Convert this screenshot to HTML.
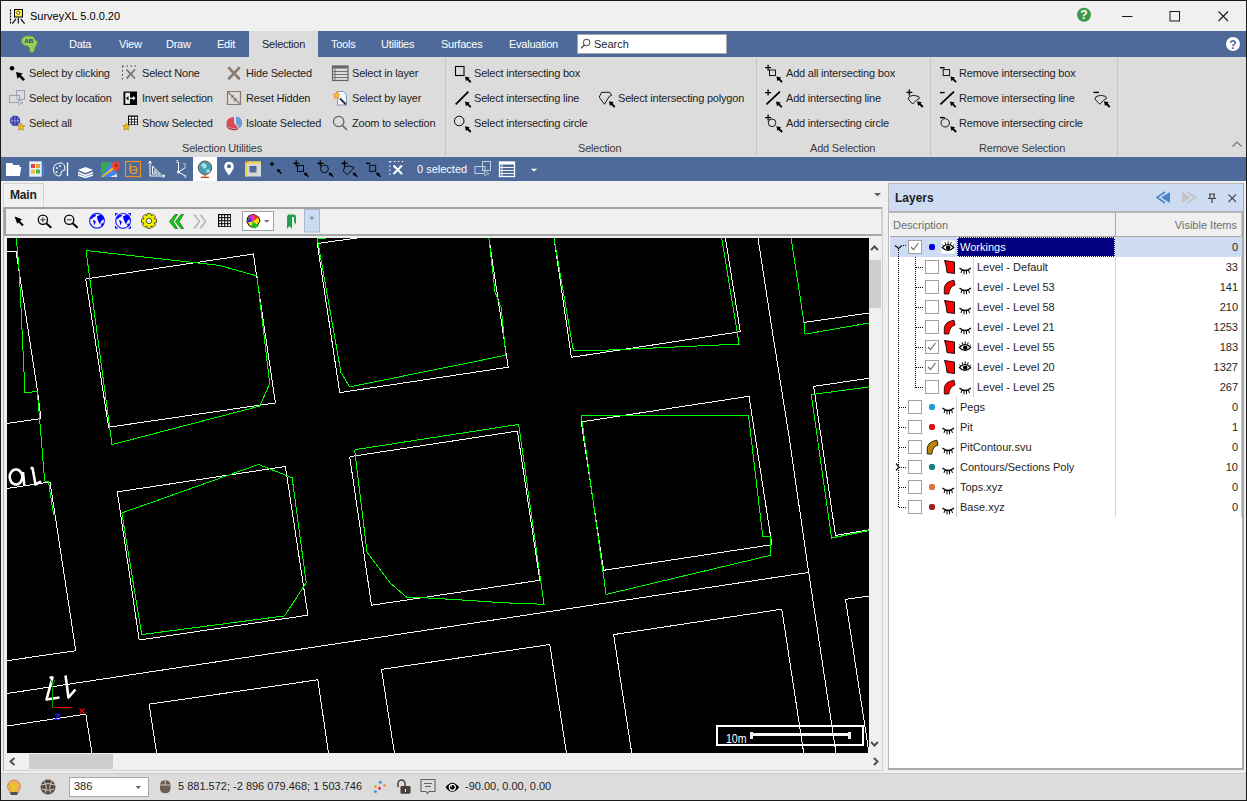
<!DOCTYPE html>
<html><head><meta charset="utf-8">
<style>
*{margin:0;padding:0;box-sizing:border-box}
html,body{width:1247px;height:801px;overflow:hidden;background:#f0f0f0;font-family:"Liberation Sans",sans-serif;font-size:11px;color:#1e1e1e}
.a{position:absolute}
.t{position:absolute;white-space:nowrap;line-height:13px}
.rt{letter-spacing:-0.2px}
.menu .t{color:#fff;top:38px;letter-spacing:-0.25px}
.glabel{color:#3c3c3c}
.sep{position:absolute;top:58px;width:1px;height:98px;background:#c4c4c4}
svg{overflow:hidden}
</style></head><body>

<!-- title bar -->
<div class="a" style="left:0;top:0;width:1247px;height:31px;background:#f0f0f0"></div>
<div class="t" style="left:30px;top:10px;color:#000">SurveyXL 5.0.0.20</div>
<!-- menu bar -->
<div class="a" style="left:1px;top:31px;width:1245px;height:26px;background:#4d6a9a"></div>
<div class="a" style="left:249px;top:31px;width:69px;height:26px;background:#dcdcdc"></div>
<div class="menu">
<div class="t" style="left:69px">Data</div>
<div class="t" style="left:119px">View</div>
<div class="t" style="left:166px">Draw</div>
<div class="t" style="left:217px">Edit</div>
<div class="t" style="left:262px;color:#1e1e1e">Selection</div>
<div class="t" style="left:331px">Tools</div>
<div class="t" style="left:381px">Utilities</div>
<div class="t" style="left:441px">Surfaces</div>
<div class="t" style="left:509px">Evaluation</div>
</div>
<div class="a" style="left:577px;top:34px;width:150px;height:20px;background:#fff;border:1px solid #a8a8a8"></div>
<svg class="a" style="left:580px;top:37px" width="14" height="14" viewBox="580 37 14 14"><circle cx="586.6" cy="42.5" r="3.3" fill="none" stroke="#404040" stroke-width="1"/><path d="M584.4,45l-3.3,3.2" stroke="#404040" stroke-width="1.2"/></svg>
<div class="t" style="left:594px;top:38px;color:#1e1e1e">Search</div>
<!-- ribbon -->
<div class="a" style="left:1px;top:57px;width:1245px;height:100px;background:#dcdcdc"></div>
<div class="sep" style="left:445px"></div>
<div class="sep" style="left:756px"></div>
<div class="sep" style="left:930px"></div>
<div class="sep" style="left:1117px"></div>
<div class="rib rt">
<div class="t" style="left:29px;top:67px">Select by clicking</div>
<div class="t" style="left:29px;top:92px">Select by location</div>
<div class="t" style="left:29px;top:117px">Select all</div>
<div class="t" style="left:142px;top:67px">Select None</div>
<div class="t" style="left:142px;top:92px">Invert selection</div>
<div class="t" style="left:142px;top:117px">Show Selected</div>
<div class="t" style="left:246px;top:67px">Hide Selected</div>
<div class="t" style="left:246px;top:92px">Reset Hidden</div>
<div class="t" style="left:246px;top:117px">Isloate Selected</div>
<div class="t" style="left:352px;top:67px">Select in layer</div>
<div class="t" style="left:352px;top:92px">Select by layer</div>
<div class="t" style="left:352px;top:117px">Zoom to selection</div>
<div class="t" style="left:474px;top:67px">Select intersecting box</div>
<div class="t" style="left:474px;top:92px">Select intersecting line</div>
<div class="t" style="left:474px;top:117px">Select intersecting circle</div>
<div class="t" style="left:618px;top:92px">Select intersecting polygon</div>
<div class="t" style="left:786px;top:67px">Add all intersecting box</div>
<div class="t" style="left:786px;top:92px">Add intersecting line</div>
<div class="t" style="left:786px;top:117px">Add intersecting circle</div>
<div class="t" style="left:959px;top:67px">Remove intersecting box</div>
<div class="t" style="left:959px;top:92px">Remove intersecting line</div>
<div class="t" style="left:959px;top:117px">Remove intersecting circle</div>
<div class="t glabel" style="left:182px;top:142px">Selection Utilities</div>
<div class="t glabel" style="left:578px;top:142px">Selection</div>
<div class="t glabel" style="left:810px;top:142px">Add Selection</div>
<div class="t glabel" style="left:979px;top:142px">Remove Selection</div>
</div>
<!-- blue toolbar -->
<div class="a" style="left:1px;top:157px;width:1245px;height:24px;background:#4d6a9a"></div>
<div class="t" style="left:417px;top:163px;color:#fff">0 selected</div>
<!-- tab area -->
<div class="a" style="left:3px;top:183px;width:41px;height:25px;background:#f0f0f0;border:1px solid #d4d4d4;border-bottom:none"></div>
<div class="t" style="left:10px;top:189px;font-weight:bold;font-size:12px;color:#1e1e1e;letter-spacing:-0.2px">Main</div>
<!-- map frame -->
<div class="a" style="left:3px;top:207px;width:1px;height:564px;background:#b0b0b0"></div>
<div class="a" style="left:4px;top:207px;width:878px;height:29px;background:#f0f0f0;border:2px solid #a0a0a0;border-right:1px solid #d0d0d0;border-bottom-color:#a8a8a8"></div>
<div class="a" style="left:869px;top:238px;width:13px;height:531px;background:#f0f0f0"></div>
<div class="a" style="left:869px;top:260px;width:12px;height:48px;background:#cdcdcd"></div>
<div class="a" style="left:882px;top:207px;width:1px;height:564px;background:#d0d0d0"></div>
<div class="a" style="left:4px;top:770px;width:879px;height:1px;background:#d0d0d0"></div>
<!-- hscroll -->
<div class="a" style="left:7px;top:753px;width:875px;height:17px;background:#f0f0f0"></div>
<div class="a" style="left:29px;top:754px;width:84px;height:15px;background:#cdcdcd"></div>
<svg class="a" style="left:7px;top:238px" width="862" height="515" viewBox="7 238 862 515" shape-rendering="crispEdges">
<rect x="7" y="238" width="862" height="515" fill="#000"/>
<polyline fill="none" stroke="#ffffff" points="7,251 16,251 37.5,391 41,418.5 7,423.5"/>
<polyline fill="none" stroke="#ffffff" points="7,488.5 50,482 75.8,650.7 7,660.7"/>
<polyline fill="none" stroke="#ffffff" points="85.7,279 253.4,254 275.4,402.9 108.6,427.2 85.7,279"/>
<polyline fill="none" stroke="#ffffff" points="357.1,238 317.3,243.5 339.7,392.6 508.2,367.2 488.9,238"/>
<polyline fill="none" stroke="#ffffff" points="554,238 571.4,357.3 740.3,331.7 725.4,238"/>
<polyline fill="none" stroke="#ffffff" points="758,238 771.5,326 788.8,434.9 808.7,572.4 836,753"/>
<polyline fill="none" stroke="#ffffff" points="804,322.5 869,313"/>
<polyline fill="none" stroke="#ffffff" points="117.3,491.9 285.4,466.5 307.9,615.2 139.2,640 117.3,491.9"/>
<polyline fill="none" stroke="#ffffff" points="349.7,456.7 517.4,431.1 539.8,580.3 371.5,605.2 349.7,456.7"/>
<polyline fill="none" stroke="#ffffff" points="581.2,421.9 749,396.3 771.9,544.7 603.6,570.3 581.2,421.9"/>
<polyline fill="none" stroke="#ffffff" points="869,378.2 813.7,386.4 835.5,535.5 869,529.8"/>
<polyline fill="none" stroke="#ffffff" points="7,693.5 808.7,572.4"/>
<polyline fill="none" stroke="#ffffff" points="7,726 85.8,714.1 92,753"/>
<polyline fill="none" stroke="#ffffff" points="156.6,753 149.1,704.2 317.8,679.8 328.5,753"/>
<polyline fill="none" stroke="#ffffff" points="394.4,753 381.5,669.4 549.8,644.5 566.4,753"/>
<polyline fill="none" stroke="#ffffff" points="631.7,753 613.6,634.6 781.8,609.2 803.7,753"/>
<polyline fill="none" stroke="#ffffff" points="869,596 845.5,599.3 869,753"/>
<polyline fill="none" stroke="#00ff00" points="16.3,238 19.3,272 25,393 37.3,391.2 44.7,481 48.5,482 53.5,514.2 55,514"/>
<polyline fill="none" stroke="#00ff00" points="86,250.5 218.8,265.3 257,276 269.7,383.7 259.8,406.1 112,444.6 86,250.5"/>
<polyline fill="none" stroke="#00ff00" points="326,238.5 317.3,238.5 341,372.7 349.7,386.9 505.8,355.3 501.3,308 495,292 488.9,238"/>
<polyline fill="none" stroke="#00ff00" points="554,238 573.4,350.8 592,350.8 739.1,344.1 721.7,238"/>
<polyline fill="none" stroke="#00ff00" points="791.1,238 804,322.5 805,334.2 869,323"/>
<polyline fill="none" stroke="#00ff00" points="121.8,513 258.5,464.5 292.1,477.7 306.2,582.7 284.6,615.9 141.7,634.6 121.8,513"/>
<polyline fill="none" stroke="#00ff00" points="354.6,449.7 518.7,424.4 544,604.2 517.4,603.5 496.3,602.3 459,599.8 424.2,597.8 406.8,597.3 390.7,583.6 367,552.1 354.6,449.7"/>
<polyline fill="none" stroke="#00ff00" points="581.2,415.4 748.5,415.4 762.7,536.2 770.2,536.2 770.2,555.4 606.1,594.4 581.2,415.4"/>
<polyline fill="none" stroke="#00ff00" points="869,386.9 811.2,394.6 831.6,538 869,530.5"/>
<g fill="none" stroke="#fff" stroke-width="2.6" shape-rendering="geometricPrecision" stroke-linejoin="round">
<ellipse cx="16" cy="477" rx="6.3" ry="7.6"/>
<path d="M23,472 L24.3,486"/>
<path d="M30.5,468 L32.5,468 L35.5,484.5 L41,481.5"/>
<path d="M49.5,677.5 L52.5,677.5 L46.5,699.5 L59.5,697.5"/>
<path d="M65.5,675.5 L68.5,697.5 L75.5,689.5"/>
</g>
<line x1="52.5" y1="686" x2="52.5" y2="707.5" stroke="#00a000"/>
<path d="M51,680 L53,685 M55,680 L52,687" stroke="#00a000" stroke-width="1" fill="none" shape-rendering="geometricPrecision"/>
<line x1="53" y1="707.5" x2="71.5" y2="707.5" stroke="#f00000" stroke-width="1.2"/>
<path d="M79.5,708.5 L84.5,713.5 M84.5,708.5 L79.5,713.5" stroke="#f00000" stroke-width="1.3" fill="none" shape-rendering="geometricPrecision"/>
<path d="M55,714.5 H59.5 L55,719.3 H59.8" stroke="#2020ff" stroke-width="1.3" fill="none" shape-rendering="geometricPrecision"/>
<rect x="717" y="725.5" width="146" height="19" fill="none" stroke="#fff" stroke-width="2"/>
<text x="726" y="743" fill="#fff" font-family="Liberation Sans" font-size="12" transform="translate(726 743) scale(0.88 1) translate(-726 -743)">10m</text>
<rect x="751" y="733" width="99" height="3" fill="#f8f8f8"/>
<rect x="750" y="731.5" width="3" height="7" fill="#f0f0f0"/>
<rect x="848" y="731.5" width="3" height="7" fill="#f0f0f0"/>
</svg>
<!-- status bar -->
<div class="a" style="left:1px;top:773px;width:1245px;height:27px;background:#dcdcdc;border-top:1px solid #cdcdcd"></div>
<div class="a" style="left:69px;top:777px;width:80px;height:20px;background:#fff;border:1px solid #a8a8a8"></div>
<div class="t" style="left:74px;top:780px">386</div>
<div class="t" style="left:178px;top:780px">5 881.572; -2 896 079.468; 1 503.746</div>
<div class="t" style="left:465px;top:780px">-90.00, 0.00, 0.00</div>
<svg class="a" style="left:0;top:0" width="1247" height="801" viewBox="0 0 1247 801"><path d="M10.5,9.5V24" stroke="#000" stroke-width="1.2" stroke-dasharray="2,1"/>
<rect x="14.5" y="9.5" width="8" height="7.5" fill="#ffee33" stroke="#000" stroke-width="1"/>
<circle cx="18.3" cy="12.8" r="1.6" fill="#fff" stroke="#000" stroke-width="0.6"/>
<path d="M18.3,17.5V23.5M16,18.8L12.3,23.6M20.7,18.8L24.6,23.6" stroke="#000" stroke-width="1.1"/>
<circle cx="1084" cy="14.8" r="7" fill="#3a9a4a"/>
<text x="1084" y="19.3" text-anchor="middle" font-family="Liberation Sans" font-weight="bold" font-size="12" fill="#fff">?</text>
<path d="M1122,16.5h10.5" stroke="#1a1a1a" stroke-width="1"/>
<rect x="1170" y="11.5" width="9.5" height="9.5" fill="none" stroke="#1a1a1a" stroke-width="1"/>
<path d="M1218.5,11.5l9.5,9.5M1228,11.5l-9.5,9.5" stroke="#1a1a1a" stroke-width="1.1"/>
<circle cx="1233" cy="44" r="7" fill="#fff"/>
<text x="1233" y="48.5" text-anchor="middle" font-family="Liberation Sans" font-weight="bold" font-size="12" fill="#4d6a9a">?</text>
<path d="M24,37 Q27,35.5 30,36.3 Q33.5,36 34.5,38.5 Q35,40.5 37.3,41.5 Q37.5,44.5 35.5,46 Q34.5,48 34,51 Q32.5,53.2 30.5,52.3 Q29.8,50 29.5,47.5 Q28,45.5 25,45.3 Q21.3,44 21.4,40.5 Q22,38 24,37 Z" fill="#9ccc50" stroke="#78a838" stroke-width="0.6"/>
<text x="24.3" y="42.8" font-family="Liberation Sans" font-weight="bold" font-size="6.2" fill="#1a3a8a">AB</text>
<polyline points="1232.5,146.5 1237,142 1241.5,146.5" fill="none" stroke="#707070" stroke-width="1.1"/>
<circle cx="12" cy="68.3" r="2.3" fill="#000"/>
<polygon points="16,72 22.665,73.395 17.395,78.665" fill="#000"/><line x1="19.1" y1="75.1" x2="24.06" y2="80.06" stroke="#000" stroke-width="2.635"/>
<rect x="16.5" y="90.5" width="8" height="9" fill="none" stroke="#9aa0b0" stroke-width="1"/>
<rect x="9.5" y="95.5" width="10" height="7" fill="#dcdcdc" fill-opacity="0.5" stroke="#9aa0b0" stroke-width="1"/>
<polygon points="18,99.5 23,103 20,103.5 19,105" fill="#dcdcdc" stroke="#9aa0b0" stroke-width="0.8"/>
<circle cx="15" cy="120.8" r="5.2" fill="#3535a8"/>
<path d="M12,117v7.5M15,116v9.5M18,117v7.5M10.5,120.8h9" stroke="#9aa0e0" stroke-width="0.8"/>
<polygon points="21.00,123.00 22.06,125.54 24.80,125.76 22.71,127.56 23.35,130.24 21.00,128.80 18.65,130.24 19.29,127.56 17.20,125.76 19.94,125.54" fill="#f5c400" stroke="#a07800" stroke-width="0.6"/>
<path d="M122.5,66h16M122.5,66v15" stroke="#404040" stroke-width="1" stroke-dasharray="1.5,2.5"/>
<path d="M126.5,69.5l8.5,9M135,69.5l-8.5,9" stroke="#707070" stroke-width="1.8"/>
<rect x="123.5" y="91.5" width="13.5" height="13.5" fill="#000"/>
<rect x="125.3" y="92.8" width="4.7" height="11" fill="#e8e8e8"/>
<path d="M126.5,98.3h8" stroke="#fff" stroke-width="1.3"/><polygon points="126,98.3 128.5,96 128.5,100.6" fill="#000"/><polygon points="135.5,98.3 133,96 133,100.6" fill="#fff"/>
<rect x="128" y="115.5" width="10" height="9.5" fill="#000"/>
<rect x="129" y="116.8" width="2.2" height="2" fill="#fff"/>
<rect x="132" y="116.8" width="2.2" height="2" fill="#fff"/>
<rect x="135" y="116.8" width="2.2" height="2" fill="#fff"/>
<rect x="129" y="119.6" width="2.2" height="2" fill="#fff"/>
<rect x="132" y="119.6" width="2.2" height="2" fill="#fff"/>
<rect x="135" y="119.6" width="2.2" height="2" fill="#fff"/>
<rect x="129" y="122.4" width="2.2" height="2" fill="#fff"/>
<rect x="132" y="122.4" width="2.2" height="2" fill="#fff"/>
<rect x="135" y="122.4" width="2.2" height="2" fill="#fff"/>
<polygon points="126.30,123.20 127.31,125.62 129.91,125.83 127.93,127.53 128.53,130.07 126.30,128.71 124.07,130.07 124.67,127.53 122.69,125.83 125.29,125.62" fill="#f5c400" stroke="#a07800" stroke-width="0.6"/>
<path d="M229,68l10,10.5M239,68l-10,10.5" stroke="#8c7a70" stroke-width="2.6" stroke-linecap="round"/>
<path d="M227.5,91.5h13v13h-13z" fill="none" stroke="#8c7a70" stroke-width="1.2"/>
<path d="M228,92l5.5,5.5M240,104l-6,-6" stroke="#8c7a70" stroke-width="1.2"/><polygon points="234,98 230.5,97.5 233.5,94.5" fill="#8c7a70"/><polygon points="233.5,98.5 237.5,98.5 234,102" fill="#8c7a70"/>
<path d="M234,123 L234,117 A7.5,6 0 0 0 226.5,124 A7.5,5 0 0 0 238,127.5 Z" fill="#d94a58"/>
<path d="M226.5,124.5 A7.5,5 0 0 0 238,128 L238,129.5 A7.5,5 0 0 1 226.5,126 Z" fill="#b83040"/>
<path d="M236,116.5 A6,6 0 0 1 242,123.5 A6,6 0 0 1 239.5,128.5 L236,123 Z" fill="#6a9ad8"/>
<rect x="332.5" y="66" width="15.5" height="14.5" fill="none" stroke="#666" stroke-width="1.2"/>
<rect x="332.5" y="66" width="15.5" height="2.5" fill="#666"/>
<path d="M332.5,71.5h15.5M332.5,74.5h15.5M332.5,77.5h15.5M335,68.5v12" stroke="#666" stroke-width="0.9"/>
<path d="M337.5,91.5h6l3,3v10.5h-9z" fill="#f4f4ff" stroke="#8090b0" stroke-width="0.9"/>
<path d="M340,98.5l6,6" stroke="#203040" stroke-width="1.8"/>
<polygon points="336.50,91.70 337.51,94.12 340.11,94.33 338.13,96.03 338.73,98.57 336.50,97.21 334.27,98.57 334.87,96.03 332.89,94.33 335.49,94.12" fill="#ffc020" stroke="#e08000" stroke-width="0.6"/>
<circle cx="338.7" cy="121.5" r="5.2" fill="none" stroke="#606060" stroke-width="1.2"/><path d="M342.5,125.5l4.5,4.5" stroke="#606060" stroke-width="1.5"/>
<rect x="455.5" y="66.5" width="8.5" height="9" fill="none" stroke="#000" stroke-width="1.1"/><polygon points="465,76.5 469.73,77.49 465.99,81.23" fill="#000"/><line x1="467.2" y1="78.7" x2="470.72" y2="82.22" stroke="#000" stroke-width="1.87"/>
<path d="M455.7,104.4L468.4,91.7" stroke="#000" stroke-width="1.8"/><polygon points="465,101.4 469.73,102.39 465.99,106.13" fill="#000"/><line x1="467.2" y1="103.6" x2="470.72" y2="107.12" stroke="#000" stroke-width="1.87"/>
<circle cx="459.2" cy="121" r="4.8" fill="none" stroke="#000" stroke-width="1"/><polygon points="465,126.3 469.73,127.29 465.99,131.03" fill="#000"/><line x1="467.2" y1="128.5" x2="470.72" y2="132.02" stroke="#000" stroke-width="1.87"/>
<polygon points="599.2,97.2 601.5,92.3 609.6,92.3 611.7,95.3 609.3,96.3 604.5,104.3" fill="none" stroke="#000" stroke-width="0.9"/><polygon points="609,101.3 613.73,102.29 609.99,106.03" fill="#000"/><line x1="611.2" y1="103.5" x2="614.72" y2="107.02" stroke="#000" stroke-width="1.87"/>
<path d="M765.1,67.7h6M768.1,64.7v6" stroke="#000" stroke-width="1.3" fill="none"/><rect x="769.5" y="70" width="6" height="5.6" fill="none" stroke="#000" stroke-width="0.9"/><polygon points="776.4,76.4 781.13,77.39 777.39,81.13" fill="#000"/><line x1="778.6" y1="78.6" x2="782.12" y2="82.12" stroke="#000" stroke-width="1.87"/>
<path d="M765.1,92.6h6M768.1,89.6v6" stroke="#000" stroke-width="1.3" fill="none"/><path d="M766.4,104.4L779.9,91.7" stroke="#000" stroke-width="1.8"/><polygon points="776,101.4 780.73,102.39 776.99,106.13" fill="#000"/><line x1="778.2" y1="103.6" x2="781.72" y2="107.12" stroke="#000" stroke-width="1.87"/>
<path d="M765.1,117.6h6M768.1,114.6v6" stroke="#000" stroke-width="1.3" fill="none"/><circle cx="772.1" cy="122.8" r="3.8" fill="none" stroke="#000" stroke-width="0.9"/><polygon points="776.4,126.3 781.13,127.29 777.39,131.03" fill="#000"/><line x1="778.6" y1="128.5" x2="782.12" y2="132.02" stroke="#000" stroke-width="1.87"/>
<path d="M906.3,92.4h6M909.3,89.4v6" stroke="#000" stroke-width="1.3" fill="none"/><polygon points="908.1,98.9 909.6,96.3 913.5,95.3 918.6,96.5 919.5,98.3 916.5,100.1 912.6,104" fill="none" stroke="#000" stroke-width="0.9"/><polygon points="917.1,101.3 921.83,102.29 918.09,106.03" fill="#000"/><line x1="919.3" y1="103.5" x2="922.82" y2="107.02" stroke="#000" stroke-width="1.87"/>
<path d="M940,67.7H944.7" stroke="#000" stroke-width="1.4" fill="none"/><rect x="943.2" y="69.6" width="6.4" height="6" fill="none" stroke="#000" stroke-width="0.9"/><polygon points="950.4,76.4 955.13,77.39 951.39,81.13" fill="#000"/><line x1="952.6" y1="78.6" x2="956.12" y2="82.12" stroke="#000" stroke-width="1.87"/>
<path d="M940,92.6H944.7" stroke="#000" stroke-width="1.4" fill="none"/><path d="M940.4,104.4L953.9,91.7" stroke="#000" stroke-width="1.8"/><polygon points="950,101.4 954.73,102.39 950.99,106.13" fill="#000"/><line x1="952.2" y1="103.6" x2="955.72" y2="107.12" stroke="#000" stroke-width="1.87"/>
<path d="M940,117.6H944.7" stroke="#000" stroke-width="1.4" fill="none"/><circle cx="945.2" cy="122.8" r="4.2" fill="none" stroke="#000" stroke-width="0.9"/><polygon points="950.4,126.3 955.13,127.29 951.39,131.03" fill="#000"/><line x1="952.6" y1="128.5" x2="956.12" y2="132.02" stroke="#000" stroke-width="1.87"/>
<path d="M1093.5,92.4H1098.9" stroke="#000" stroke-width="1.4" fill="none"/><polygon points="1095,99.2 1096.2,96.5 1100.7,95.3 1105.5,96.3 1106.7,98.3 1103.4,100.4 1099.8,104.3" fill="none" stroke="#000" stroke-width="0.9"/><polygon points="1104,101.3 1108.73,102.29 1104.99,106.03" fill="#000"/><line x1="1106.2" y1="103.5" x2="1109.72" y2="107.02" stroke="#000" stroke-width="1.87"/>
<path d="M6,163h6l1.5,2H19.5v2H21.3L19.8,176H6z" fill="#fff"/>
<rect x="29.5" y="161.5" width="12" height="15" fill="#e8eef8" stroke="#c0c8d8" stroke-width="0.8"/><rect x="31" y="164" width="4" height="4" fill="#e04040"/><rect x="36" y="164" width="4" height="4" fill="#f0a030"/><rect x="31" y="169.5" width="4" height="4" fill="#f0c040"/><rect x="36" y="169.5" width="4" height="4" fill="#40c040"/><path d="M43,163v13" stroke="#4080e0" stroke-width="1.8"/>
<path d="M61,163 Q53,163 53.5,170 Q54,176 60,176 Q62,174 61,172 Q63,170 65,170 Q65,163 61,163z" fill="none" stroke="#fff" stroke-width="1"/><circle cx="57" cy="168" r="0.9" fill="#fff"/><circle cx="56.5" cy="172" r="0.9" fill="#fff"/><circle cx="60" cy="166" r="0.9" fill="#fff"/><path d="M67.5,165v11" stroke="#fff" stroke-width="1.3"/><path d="M67.5,161.5q-1.5,2 0,4q1.5,-2 0,-4z" fill="#fff"/>
<path d="M78,170l7.5,-3l7.5,3l-7.5,3z" fill="#fff"/><path d="M78,172.5l7.5,3l7.5,-3M78,175l7.5,2.5l7.5,-2.5" fill="none" stroke="#fff" stroke-width="1.4"/>
<path d="M101,162h10l-10,15z" fill="#34a853"/><path d="M101,177l10,-15l6,7v8z" fill="#4285f4"/><path d="M101,177l12.5,-10.5l1.5,2l-12,8.5z" fill="#fbbc04"/><path d="M110,177l7,-3v3z" fill="#e8e8e8"/><path d="M112,165.5a4,4 0 1 1 8,0c0,3 -4,7 -4,7s-4,-4 -4,-7z" fill="#ea4335"/><circle cx="116" cy="165.5" r="1.4" fill="#a52714"/>
<rect x="125.5" y="161.5" width="15" height="15" fill="none" stroke="#f09020" stroke-width="1.2"/><circle cx="133.5" cy="170" r="3.5" fill="none" stroke="#f0a030" stroke-width="1.2"/><path d="M130,163.5v6.5M131,170h5" stroke="#f0a030" stroke-width="1.2"/>
<path d="M150,161v15h15M150,161l-1.5,2.5M150,161l1.5,2.5M165,176l-2.5,-1.5M165,176l-2.5,1.5" fill="none" stroke="#fff" stroke-width="1"/><path d="M152.5,166v8h8z" fill="none" stroke="#fff" stroke-width="1"/><path d="M154,169v4h4z" fill="#c8d0e0"/>
<path d="M178.5,172v-10M178.5,172l7,-4.5M178.5,172l7,4" fill="none" stroke="#fff" stroke-width="1"/><circle cx="178.5" cy="172" r="1.5" fill="#fff"/><text x="176" y="163" font-size="5" font-family="Liberation Sans" fill="#fff">z</text><text x="183" y="167" font-size="5" font-family="Liberation Sans" fill="#fff">Y</text><text x="184" y="178" font-size="5" font-family="Liberation Sans" fill="#fff">x</text>
<rect x="193" y="157" width="24" height="24" fill="#fff"/><circle cx="205" cy="167.8" r="6.8" fill="#40a0b0" stroke="#803030" stroke-width="0.8"/><path d="M201,165l2,-2l3,1l1,3l-3,2zM206,170l3,-1l1,3l-3,1z" fill="#a0e0e0"/><path d="M205,174.6v1.8M201,177.3h8" stroke="#c04010" stroke-width="1.3"/>
<path d="M229,175.5 Q224,169 224.2,166.5 A4.8,4.8 0 0 1 233.8,166.5 Q234,169 229,175.5z" fill="#fff"/><circle cx="229" cy="166.3" r="2" fill="#4d6a9a"/>
<rect x="245" y="161.5" width="16" height="15" fill="#d8d8d8"/><rect x="245" y="161.5" width="16" height="2" fill="#f0d040"/><rect x="245" y="161.5" width="2" height="15" fill="#f0d040"/><rect x="249.5" y="166" width="7" height="6.5" fill="#4d6a9a"/><path d="M245.5,162h2" stroke="#e04040" stroke-width="1"/>
<circle cx="272" cy="164" r="1.8" fill="#000"/><polygon points="277,169 280.655,169.765 277.765,172.655" fill="#000"/><line x1="278.7" y1="170.7" x2="281.42" y2="173.42" stroke="#000" stroke-width="1.445"/>
<path d="M293.2,163.4h6M296.2,160.4v6" stroke="#000" stroke-width="1.3" fill="none"/><rect x="297.5" y="165.5" width="6" height="6" fill="none" stroke="#000" stroke-width="0.9"/><polygon points="304,172.4 307.655,173.165 304.765,176.055" fill="#000"/><line x1="305.7" y1="174.1" x2="308.42" y2="176.82" stroke="#000" stroke-width="1.445"/>
<path d="M317.3,163.4h6M320.3,160.4v6" stroke="#000" stroke-width="1.3" fill="none"/><circle cx="324.5" cy="168.8" r="3.9" fill="none" stroke="#000" stroke-width="0.9"/><polygon points="328.7,172.4 332.355,173.165 329.465,176.055" fill="#000"/><line x1="330.4" y1="174.1" x2="333.12" y2="176.82" stroke="#000" stroke-width="1.445"/>
<path d="M341.4,163.4h6M344.4,160.4v6" stroke="#000" stroke-width="1.3" fill="none"/><polygon points="343.2,171 345,166.5 349.5,165.8 354,167.5 352,170 347.5,174.8" fill="none" stroke="#000" stroke-width="0.9"/><polygon points="352.8,172.4 356.455,173.165 353.565,176.055" fill="#000"/><line x1="354.5" y1="174.1" x2="357.22" y2="176.82" stroke="#000" stroke-width="1.445"/>
<path d="M366,163.4H370.2" stroke="#000" stroke-width="1.4" fill="none"/><rect x="369.7" y="165.3" width="6" height="6" fill="none" stroke="#000" stroke-width="0.9"/><polygon points="376.2,172.4 379.855,173.165 376.965,176.055" fill="#000"/><line x1="377.9" y1="174.1" x2="380.62" y2="176.82" stroke="#000" stroke-width="1.445"/>
<path d="M389.8,161.5h15M389.8,161.5v15.5" stroke="#fff" stroke-width="1" stroke-dasharray="1.5,2.5"/><path d="M393.5,165.5l8.5,8.5M402,165.5l-8.5,8.5" stroke="#fff" stroke-width="2"/>
<rect x="482.5" y="161.5" width="8" height="9" fill="none" stroke="#c0cce0" stroke-width="1"/><rect x="475" y="166.5" width="10" height="7" fill="none" stroke="#c0cce0" stroke-width="1"/><polygon points="484,170 489,174 486,174.5 485,176" fill="#4d6a9a" stroke="#c0cce0" stroke-width="0.8"/>
<rect x="499.5" y="162" width="15" height="14.5" fill="none" stroke="#fff" stroke-width="1.3"/><rect x="499.5" y="162" width="15" height="2.5" fill="#fff"/><path d="M499.5,167.5h15M499.5,170.5h15M499.5,173.5h15M502,164.5v12" stroke="#fff" stroke-width="0.9"/>
<polygon points="530.7,168.8 537.3,168.8 534,171.5" fill="#fff"/>
<polygon points="874,193 881,193 877.5,196.5" fill="#606060"/>
<polygon points="14.6,216.6 22,219.2 17.2,223.7" fill="#000"/><path d="M18,220.5l5,5" stroke="#000" stroke-width="2"/>
<circle cx="42.9" cy="219.8" r="4.6" fill="none" stroke="#000" stroke-width="1.3"/><path d="M46.3,223.3l5,4.5" stroke="#000" stroke-width="2"/><path d="M40.4,219.8h5M42.9,217.3v5" stroke="#333" stroke-width="1"/>
<circle cx="69.2" cy="219.8" r="4.6" fill="none" stroke="#000" stroke-width="1.3"/><path d="M72.6,223.3l5,4.5" stroke="#000" stroke-width="2"/><path d="M67,219.8h4.5" stroke="#333" stroke-width="1"/>
<circle cx="97" cy="220.8" r="7.4" fill="none" stroke="#2020ff" stroke-width="1.2"/><polygon points="90.20,218.20 92.00,215.60 94.50,214.60 96.00,214.80 95.70,216.20 93.20,217.20 91.80,219.20" fill="#0000ff"/><polygon points="92.80,220.00 94.80,220.60 95.80,221.80 94.20,225.40 93.60,222.00" fill="#0000ff"/><polygon points="97.00,216.20 100.00,215.00 102.80,215.40 104.20,219.00 101.80,220.20 99.80,224.20 98.40,221.30 97.40,219.20" fill="#0000ff"/><circle cx="102.3" cy="224.6" r="1.3" fill="#0000ff"/>
<circle cx="123.1" cy="220.9" r="7.4" fill="none" stroke="#2020ff" stroke-width="1.2"/><polygon points="116.30,218.30 118.10,215.70 120.60,214.70 122.10,214.90 121.80,216.30 119.30,217.30 117.90,219.30" fill="#0000ff"/><polygon points="118.90,220.10 120.90,220.70 121.90,221.90 120.30,225.50 119.70,222.10" fill="#0000ff"/><polygon points="123.10,216.30 126.10,215.10 128.90,215.50 130.30,219.10 127.90,220.30 125.90,224.30 124.50,221.40 123.50,219.30" fill="#0000ff"/><circle cx="128.4" cy="224.7" r="1.3" fill="#0000ff"/><path d="M115,213h3.2l-3.2,3.2zM131,213h-3.2l3.2,3.2zM115,228.8h3.2l-3.2,-3.2zM131,228.8h-3.2l3.2,-3.2z" fill="#2020ff"/>
<polygon points="154.11,218.62 156.42,219.24 156.42,222.56 154.11,223.18 154.23,222.90 155.42,224.97 153.07,227.32 151.00,226.13 151.28,226.01 150.66,228.32 147.34,228.32 146.72,226.01 147.00,226.13 144.93,227.32 142.58,224.97 143.77,222.90 143.89,223.18 141.58,222.56 141.58,219.24 143.89,218.62 143.77,218.90 142.58,216.83 144.93,214.48 147.00,215.67 146.72,215.79 147.34,213.48 150.66,213.48 151.28,215.79 151.00,215.67 153.07,214.48 155.42,216.83 154.23,218.90" fill="#f0f000" stroke="#303000" stroke-width="0.8"/><circle cx="149" cy="220.9" r="2.7" fill="#f0f0f0" stroke="#303000" stroke-width="0.8"/>
<path d="M175,214.5l-5.5,7l5.5,7h2.5l-4.5,-7l4.5,-7zM181,214.5l-5.5,7l5.5,7h2.5l-4.5,-7l4.5,-7z" fill="#00e000" stroke="#103010" stroke-width="0.6"/>
<path d="M193,214.5l5.5,7l-5.5,7h2.5l5,-7l-5,-7zM199,214.5l5.5,7l-5.5,7h2.5l5,-7l-5,-7z" fill="#b8b8b8"/>
<rect x="218" y="214" width="13" height="13" fill="#000"/>
<rect x="219.2" y="215.2" width="2" height="2" fill="#fff"/>
<rect x="222.2" y="215.2" width="2" height="2" fill="#fff"/>
<rect x="225.2" y="215.2" width="2" height="2" fill="#fff"/>
<rect x="228.2" y="215.2" width="2" height="2" fill="#fff"/>
<rect x="219.2" y="218.2" width="2" height="2" fill="#fff"/>
<rect x="222.2" y="218.2" width="2" height="2" fill="#fff"/>
<rect x="225.2" y="218.2" width="2" height="2" fill="#fff"/>
<rect x="228.2" y="218.2" width="2" height="2" fill="#fff"/>
<rect x="219.2" y="221.2" width="2" height="2" fill="#fff"/>
<rect x="222.2" y="221.2" width="2" height="2" fill="#fff"/>
<rect x="225.2" y="221.2" width="2" height="2" fill="#fff"/>
<rect x="228.2" y="221.2" width="2" height="2" fill="#fff"/>
<rect x="219.2" y="224.2" width="2" height="2" fill="#fff"/>
<rect x="222.2" y="224.2" width="2" height="2" fill="#fff"/>
<rect x="225.2" y="224.2" width="2" height="2" fill="#fff"/>
<rect x="228.2" y="224.2" width="2" height="2" fill="#fff"/>
<rect x="242.5" y="211.5" width="31" height="19" fill="#fff" stroke="#a0a0a0" stroke-width="1"/>
<path d="M249,215.5l5,-1l4.5,2.5l1.5,4l-2.5,4l-4,2.5l-4,-1.5l-2.5,-4l0.5,-4z" fill="#ffe000" stroke="#000" stroke-width="1"/><path d="M249,215.5l4,6l-5.5,1z" fill="#4030d0"/><path d="M249,215.5l5,-1l-1,7z" fill="#e020e0"/><path d="M254,214.5l4.5,2.5l-5.5,4.5z" fill="#f03030"/><path d="M253,221.5l-2,5.5l4,1.5l4,-2.5z" fill="#20c020"/>
<polygon points="264,220 269.5,220 266.75,222.8" fill="#707070"/>
<path d="M288,214.5h6q2,0 2,3v7l-2,-2.5v-5l-2,0v12l-2.5,-3l-2.5,3v-12z" fill="#20a050"/>
<rect x="304.5" y="209.5" width="15" height="22.5" fill="#ccdcf0" stroke="#a8b8d0" stroke-width="1"/>
<text x="311.6" y="224" text-anchor="middle" font-family="Liberation Sans" font-size="10" fill="#707080">*</text>
<polyline points="871,250 874.5,246.5 878,250" fill="none" stroke="#505050" stroke-width="2"/>
<polyline points="871,742 874.5,745.5 878,742" fill="none" stroke="#505050" stroke-width="2"/>
<polyline points="14.5,758 10.5,761.5 14.5,765" fill="none" stroke="#505050" stroke-width="2"/>
<polyline points="874,758 877.5,761.5 874,765" fill="none" stroke="#505050" stroke-width="2"/>
<path d="M14,780a6.5,6.5 0 0 1 6.5,6.5c0,3 -2.5,4 -2.5,6.5h-8c0,-2.5 -2.5,-3.5 -2.5,-6.5a6.5,6.5 0 0 1 6.5,-6.5z" fill="#f0b050" stroke="#c08040" stroke-width="0.8"/><path d="M12,784l2,4l2,-4M14,788v4" stroke="#e0e000" stroke-width="1.2" fill="none"/><rect x="10.5" y="792" width="7" height="3" fill="#505050"/>
<circle cx="48" cy="787" r="7.5" fill="#5a4a40"/><path d="M41,785q7,-3 14,0M41.5,789q7,3 13,0M44,781q4,6 1,12M52,781q-4,6 -1,12" stroke="#d8d0c8" stroke-width="0.9" fill="none"/>
<polygon points="135.5,786 141,786 138.25,789" fill="#606060"/>
<path d="M160,784.5a5.3,5 0 0 1 10.5,0v4.5a5.3,5 0 0 1 -10.5,0z" fill="#6e5e52"/><path d="M165.2,780v5M160,785h10.5" stroke="#dcdcdc" stroke-width="0.8"/>
<circle cx="380.2" cy="782.3" r="1.5" fill="#4a90e0"/><circle cx="375.4" cy="791.4" r="1.5" fill="#4a90e0"/><circle cx="375.4" cy="786.4" r="1.5" fill="#f0a040"/><circle cx="384.5" cy="785.4" r="1.5" fill="#f0a040"/><circle cx="379.5" cy="788.3" r="1.5" fill="#e03050"/>
<rect x="400.5" y="786" width="10" height="7.8" rx="1.2" fill="#4a3e36"/><path d="M398,787v-3.5a3.5,3.5 0 0 1 7,0v2.5" fill="none" stroke="#4a3e36" stroke-width="1.5"/><path d="M405.5,792v-3" stroke="#fff" stroke-width="1"/>
<path d="M421,779.5h14v12h-6l-1.5,2l-1.5,-2h-5z" fill="none" stroke="#6a5e56" stroke-width="1.1"/><path d="M424,783.5h8M425,786.5h6" stroke="#6a5e56" stroke-width="1.1"/>
<path d="M445.5,787.3q6.8,-9 13.6,0q-6.8,9 -13.6,0z" fill="#000"/><circle cx="452.3" cy="787.3" r="3.6" fill="#fff"/><circle cx="452.3" cy="787.3" r="2.4" fill="#000"/><circle cx="451.3" cy="786.3" r="0.7" fill="#fff"/></svg>
<!-- layers panel -->
<div class="a" style="left:888px;top:183px;width:356px;height:587px;background:#fff;border:1px solid #b8b8b8;border-right:2px solid #a8a8a8;border-bottom:2px solid #a8a8a8"></div>
<div class="a" style="left:889px;top:184px;width:354px;height:29px;background:#cddcf3;border-bottom:2px solid #b4b4b4"></div>
<div class="t" style="left:895px;top:192px;font-weight:bold;font-size:12px;color:#1e1e1e">Layers</div>
<svg class="a" style="left:1150px;top:188px" width="94" height="20" viewBox="1150 188 94 20">
<polygon points="1161,197.5 1170,192 1170,203" fill="#4a86c8"/>
<polyline points="1165,192 1157,197.5 1165,203" fill="none" stroke="#4a86c8" stroke-width="1.6"/>
<polygon points="1182,192 1182,203 1190.5,197.5" fill="#c3c3c3"/>
<polyline points="1187,192 1195.5,197.5 1187,203" fill="none" stroke="#c3c3c3" stroke-width="1.6"/>
<path d="M1209,194h6M1210,194v4M1214,194v4M1208,198.5h8M1212,198.5v4.5" stroke="#404040" stroke-width="1.2" fill="none"/>
<path d="M1228.5,194.5l7.5,7.5M1236,194.5l-7.5,7.5" stroke="#505050" stroke-width="1.2" fill="none"/>
</svg>
<div class="a" style="left:890px;top:213px;width:352px;height:24px;background:#f0f0f0;border-bottom:1px solid #a8a8a8"></div>
<div class="a" style="left:1115px;top:213px;width:1px;height:23px;background:#a8a8a8"></div>
<div class="a" style="left:1241px;top:213px;width:1px;height:304px;background:#c8c8c8"></div>
<div class="t" style="left:893px;top:219px;color:#6d6d6d">Description</div>
<div class="t" style="left:1100px;top:219px;width:137px;text-align:right;color:#6d6d6d">Visible Items</div>
<div class="a" style="left:890px;top:237px;width:352px;height:20px;background:#cddcf3"></div>
<div class="a" style="left:957px;top:237px;width:158px;height:20px;background:#000080;border:1px dotted #fff"></div>
<div class="a" style="left:1115px;top:257px;width:1px;height:260px;background:#d4d4d4"></div>
<svg class="a" style="left:890px;top:237px" width="352" height="280" viewBox="890 237 352 280"><rect x="898" y="252" width="1" height="1" fill="#000"/><rect x="898" y="254" width="1" height="1" fill="#000"/><rect x="898" y="256" width="1" height="1" fill="#000"/><rect x="898" y="258" width="1" height="1" fill="#000"/><rect x="898" y="260" width="1" height="1" fill="#000"/><rect x="898" y="262" width="1" height="1" fill="#000"/><rect x="898" y="264" width="1" height="1" fill="#000"/><rect x="898" y="266" width="1" height="1" fill="#000"/><rect x="898" y="268" width="1" height="1" fill="#000"/><rect x="898" y="270" width="1" height="1" fill="#000"/><rect x="898" y="272" width="1" height="1" fill="#000"/><rect x="898" y="274" width="1" height="1" fill="#000"/><rect x="898" y="276" width="1" height="1" fill="#000"/><rect x="898" y="278" width="1" height="1" fill="#000"/><rect x="898" y="280" width="1" height="1" fill="#000"/><rect x="898" y="282" width="1" height="1" fill="#000"/><rect x="898" y="284" width="1" height="1" fill="#000"/><rect x="898" y="286" width="1" height="1" fill="#000"/><rect x="898" y="288" width="1" height="1" fill="#000"/><rect x="898" y="290" width="1" height="1" fill="#000"/><rect x="898" y="292" width="1" height="1" fill="#000"/><rect x="898" y="294" width="1" height="1" fill="#000"/><rect x="898" y="296" width="1" height="1" fill="#000"/><rect x="898" y="298" width="1" height="1" fill="#000"/><rect x="898" y="300" width="1" height="1" fill="#000"/><rect x="898" y="302" width="1" height="1" fill="#000"/><rect x="898" y="304" width="1" height="1" fill="#000"/><rect x="898" y="306" width="1" height="1" fill="#000"/><rect x="898" y="308" width="1" height="1" fill="#000"/><rect x="898" y="310" width="1" height="1" fill="#000"/><rect x="898" y="312" width="1" height="1" fill="#000"/><rect x="898" y="314" width="1" height="1" fill="#000"/><rect x="898" y="316" width="1" height="1" fill="#000"/><rect x="898" y="318" width="1" height="1" fill="#000"/><rect x="898" y="320" width="1" height="1" fill="#000"/><rect x="898" y="322" width="1" height="1" fill="#000"/><rect x="898" y="324" width="1" height="1" fill="#000"/><rect x="898" y="326" width="1" height="1" fill="#000"/><rect x="898" y="328" width="1" height="1" fill="#000"/><rect x="898" y="330" width="1" height="1" fill="#000"/><rect x="898" y="332" width="1" height="1" fill="#000"/><rect x="898" y="334" width="1" height="1" fill="#000"/><rect x="898" y="336" width="1" height="1" fill="#000"/><rect x="898" y="338" width="1" height="1" fill="#000"/><rect x="898" y="340" width="1" height="1" fill="#000"/><rect x="898" y="342" width="1" height="1" fill="#000"/><rect x="898" y="344" width="1" height="1" fill="#000"/><rect x="898" y="346" width="1" height="1" fill="#000"/><rect x="898" y="348" width="1" height="1" fill="#000"/><rect x="898" y="350" width="1" height="1" fill="#000"/><rect x="898" y="352" width="1" height="1" fill="#000"/><rect x="898" y="354" width="1" height="1" fill="#000"/><rect x="898" y="356" width="1" height="1" fill="#000"/><rect x="898" y="358" width="1" height="1" fill="#000"/><rect x="898" y="360" width="1" height="1" fill="#000"/><rect x="898" y="362" width="1" height="1" fill="#000"/><rect x="898" y="364" width="1" height="1" fill="#000"/><rect x="898" y="366" width="1" height="1" fill="#000"/><rect x="898" y="368" width="1" height="1" fill="#000"/><rect x="898" y="370" width="1" height="1" fill="#000"/><rect x="898" y="372" width="1" height="1" fill="#000"/><rect x="898" y="374" width="1" height="1" fill="#000"/><rect x="898" y="376" width="1" height="1" fill="#000"/><rect x="898" y="378" width="1" height="1" fill="#000"/><rect x="898" y="380" width="1" height="1" fill="#000"/><rect x="898" y="382" width="1" height="1" fill="#000"/><rect x="898" y="384" width="1" height="1" fill="#000"/><rect x="898" y="386" width="1" height="1" fill="#000"/><rect x="898" y="388" width="1" height="1" fill="#000"/><rect x="898" y="390" width="1" height="1" fill="#000"/><rect x="898" y="392" width="1" height="1" fill="#000"/><rect x="898" y="394" width="1" height="1" fill="#000"/><rect x="898" y="396" width="1" height="1" fill="#000"/><rect x="898" y="398" width="1" height="1" fill="#000"/><rect x="898" y="400" width="1" height="1" fill="#000"/><rect x="898" y="402" width="1" height="1" fill="#000"/><rect x="898" y="404" width="1" height="1" fill="#000"/><rect x="898" y="406" width="1" height="1" fill="#000"/><rect x="898" y="408" width="1" height="1" fill="#000"/><rect x="898" y="410" width="1" height="1" fill="#000"/><rect x="898" y="412" width="1" height="1" fill="#000"/><rect x="898" y="414" width="1" height="1" fill="#000"/><rect x="898" y="416" width="1" height="1" fill="#000"/><rect x="898" y="418" width="1" height="1" fill="#000"/><rect x="898" y="420" width="1" height="1" fill="#000"/><rect x="898" y="422" width="1" height="1" fill="#000"/><rect x="898" y="424" width="1" height="1" fill="#000"/><rect x="898" y="426" width="1" height="1" fill="#000"/><rect x="898" y="428" width="1" height="1" fill="#000"/><rect x="898" y="430" width="1" height="1" fill="#000"/><rect x="898" y="432" width="1" height="1" fill="#000"/><rect x="898" y="434" width="1" height="1" fill="#000"/><rect x="898" y="436" width="1" height="1" fill="#000"/><rect x="898" y="438" width="1" height="1" fill="#000"/><rect x="898" y="440" width="1" height="1" fill="#000"/><rect x="898" y="442" width="1" height="1" fill="#000"/><rect x="898" y="444" width="1" height="1" fill="#000"/><rect x="898" y="446" width="1" height="1" fill="#000"/><rect x="898" y="448" width="1" height="1" fill="#000"/><rect x="898" y="450" width="1" height="1" fill="#000"/><rect x="898" y="452" width="1" height="1" fill="#000"/><rect x="898" y="454" width="1" height="1" fill="#000"/><rect x="898" y="456" width="1" height="1" fill="#000"/><rect x="898" y="458" width="1" height="1" fill="#000"/><rect x="898" y="460" width="1" height="1" fill="#000"/><rect x="898" y="462" width="1" height="1" fill="#000"/><rect x="898" y="464" width="1" height="1" fill="#000"/><rect x="898" y="466" width="1" height="1" fill="#000"/><rect x="898" y="468" width="1" height="1" fill="#000"/><rect x="898" y="470" width="1" height="1" fill="#000"/><rect x="898" y="472" width="1" height="1" fill="#000"/><rect x="898" y="474" width="1" height="1" fill="#000"/><rect x="898" y="476" width="1" height="1" fill="#000"/><rect x="898" y="478" width="1" height="1" fill="#000"/><rect x="898" y="480" width="1" height="1" fill="#000"/><rect x="898" y="482" width="1" height="1" fill="#000"/><rect x="898" y="484" width="1" height="1" fill="#000"/><rect x="898" y="486" width="1" height="1" fill="#000"/><rect x="898" y="488" width="1" height="1" fill="#000"/><rect x="898" y="490" width="1" height="1" fill="#000"/><rect x="898" y="492" width="1" height="1" fill="#000"/><rect x="898" y="494" width="1" height="1" fill="#000"/><rect x="898" y="496" width="1" height="1" fill="#000"/><rect x="898" y="498" width="1" height="1" fill="#000"/><rect x="898" y="500" width="1" height="1" fill="#000"/><rect x="898" y="502" width="1" height="1" fill="#000"/><rect x="898" y="504" width="1" height="1" fill="#000"/><rect x="898" y="506" width="1" height="1" fill="#000"/><rect x="915" y="257" width="1" height="1" fill="#000"/><rect x="915" y="259" width="1" height="1" fill="#000"/><rect x="915" y="261" width="1" height="1" fill="#000"/><rect x="915" y="263" width="1" height="1" fill="#000"/><rect x="915" y="265" width="1" height="1" fill="#000"/><rect x="915" y="267" width="1" height="1" fill="#000"/><rect x="915" y="269" width="1" height="1" fill="#000"/><rect x="915" y="271" width="1" height="1" fill="#000"/><rect x="915" y="273" width="1" height="1" fill="#000"/><rect x="915" y="275" width="1" height="1" fill="#000"/><rect x="915" y="277" width="1" height="1" fill="#000"/><rect x="915" y="279" width="1" height="1" fill="#000"/><rect x="915" y="281" width="1" height="1" fill="#000"/><rect x="915" y="283" width="1" height="1" fill="#000"/><rect x="915" y="285" width="1" height="1" fill="#000"/><rect x="915" y="287" width="1" height="1" fill="#000"/><rect x="915" y="289" width="1" height="1" fill="#000"/><rect x="915" y="291" width="1" height="1" fill="#000"/><rect x="915" y="293" width="1" height="1" fill="#000"/><rect x="915" y="295" width="1" height="1" fill="#000"/><rect x="915" y="297" width="1" height="1" fill="#000"/><rect x="915" y="299" width="1" height="1" fill="#000"/><rect x="915" y="301" width="1" height="1" fill="#000"/><rect x="915" y="303" width="1" height="1" fill="#000"/><rect x="915" y="305" width="1" height="1" fill="#000"/><rect x="915" y="307" width="1" height="1" fill="#000"/><rect x="915" y="309" width="1" height="1" fill="#000"/><rect x="915" y="311" width="1" height="1" fill="#000"/><rect x="915" y="313" width="1" height="1" fill="#000"/><rect x="915" y="315" width="1" height="1" fill="#000"/><rect x="915" y="317" width="1" height="1" fill="#000"/><rect x="915" y="319" width="1" height="1" fill="#000"/><rect x="915" y="321" width="1" height="1" fill="#000"/><rect x="915" y="323" width="1" height="1" fill="#000"/><rect x="915" y="325" width="1" height="1" fill="#000"/><rect x="915" y="327" width="1" height="1" fill="#000"/><rect x="915" y="329" width="1" height="1" fill="#000"/><rect x="915" y="331" width="1" height="1" fill="#000"/><rect x="915" y="333" width="1" height="1" fill="#000"/><rect x="915" y="335" width="1" height="1" fill="#000"/><rect x="915" y="337" width="1" height="1" fill="#000"/><rect x="915" y="339" width="1" height="1" fill="#000"/><rect x="915" y="341" width="1" height="1" fill="#000"/><rect x="915" y="343" width="1" height="1" fill="#000"/><rect x="915" y="345" width="1" height="1" fill="#000"/><rect x="915" y="347" width="1" height="1" fill="#000"/><rect x="915" y="349" width="1" height="1" fill="#000"/><rect x="915" y="351" width="1" height="1" fill="#000"/><rect x="915" y="353" width="1" height="1" fill="#000"/><rect x="915" y="355" width="1" height="1" fill="#000"/><rect x="915" y="357" width="1" height="1" fill="#000"/><rect x="915" y="359" width="1" height="1" fill="#000"/><rect x="915" y="361" width="1" height="1" fill="#000"/><rect x="915" y="363" width="1" height="1" fill="#000"/><rect x="915" y="365" width="1" height="1" fill="#000"/><rect x="915" y="367" width="1" height="1" fill="#000"/><rect x="915" y="369" width="1" height="1" fill="#000"/><rect x="915" y="371" width="1" height="1" fill="#000"/><rect x="915" y="373" width="1" height="1" fill="#000"/><rect x="915" y="375" width="1" height="1" fill="#000"/><rect x="915" y="377" width="1" height="1" fill="#000"/><rect x="915" y="379" width="1" height="1" fill="#000"/><rect x="915" y="381" width="1" height="1" fill="#000"/><rect x="915" y="383" width="1" height="1" fill="#000"/><rect x="915" y="385" width="1" height="1" fill="#000"/><rect x="915" y="387" width="1" height="1" fill="#000"/><rect x="903" y="245" width="1" height="1" fill="#000"/><rect x="905" y="245" width="1" height="1" fill="#000"/><rect x="908.5" y="240.5" width="13" height="13" fill="#fff" stroke="#a0a0a0" shape-rendering="crispEdges"/><polyline points="911,247 913.5,249.5 918.5,243" fill="none" stroke="#707070" stroke-width="1.2"/><rect x="929" y="244" width="6" height="6" rx="2" fill="#0000e0"/><rect x="941.5" y="240.5" width="13" height="13" fill="#fff"/><path d="M942.3,247.5 Q948,241.5 953.7,247.5 Q948,253.5 942.3,247.5 Z" fill="#fff" stroke="#000" stroke-width="1.1"/><circle cx="948.2" cy="247.8" r="2.3" fill="#000"/><path d="M948.2,244.5v-3.2M945.8,244.8l-0.7,-2.6M950.5,244.8l0.7,-2.6M943.8,246l-1.5,-1.3M952.5,246l1.5,-1.3" stroke="#000" stroke-width="0.9"/><polyline points="895,245.5 898.5,248.5 902,245.5" fill="none" stroke="#202020" stroke-width="1.3"/><rect x="898" y="248" width="1" height="3" fill="#202020"/><rect x="916" y="267" width="1" height="1" fill="#000"/><rect x="918" y="267" width="1" height="1" fill="#000"/><rect x="920" y="267" width="1" height="1" fill="#000"/><rect x="922" y="267" width="1" height="1" fill="#000"/><rect x="925.5" y="260.5" width="13" height="13" fill="#fff" stroke="#a0a0a0" shape-rendering="crispEdges"/><polygon points="944.5,260.5 954.5,262 954.5,273.5 947,272.5 946,265.5" fill="#ff0000" stroke="#000" stroke-width="0.9"/><path d="M959.5,268 Q965,273 971,268" fill="none" stroke="#000" stroke-width="1.3"/><path d="M962,270l-1,3M964,270.8v3.5M966.5,270.8v3.5M968.5,270l1,3" stroke="#000" stroke-width="1"/><rect x="973" y="257" width="1" height="20" fill="#d4d4d4"/><rect x="916" y="287" width="1" height="1" fill="#000"/><rect x="918" y="287" width="1" height="1" fill="#000"/><rect x="920" y="287" width="1" height="1" fill="#000"/><rect x="922" y="287" width="1" height="1" fill="#000"/><rect x="925.5" y="280.5" width="13" height="13" fill="#fff" stroke="#a0a0a0" shape-rendering="crispEdges"/><path d="M944.3,294 L944.3,288 Q945,281.5 954,280.2 L955,285 Q949.5,286.5 948.8,294 Z" fill="#ff0000" stroke="#000" stroke-width="0.8"/><path d="M959.5,288 Q965,293 971,288" fill="none" stroke="#000" stroke-width="1.3"/><path d="M962,290l-1,3M964,290.8v3.5M966.5,290.8v3.5M968.5,290l1,3" stroke="#000" stroke-width="1"/><rect x="973" y="277" width="1" height="20" fill="#d4d4d4"/><rect x="916" y="307" width="1" height="1" fill="#000"/><rect x="918" y="307" width="1" height="1" fill="#000"/><rect x="920" y="307" width="1" height="1" fill="#000"/><rect x="922" y="307" width="1" height="1" fill="#000"/><rect x="925.5" y="300.5" width="13" height="13" fill="#fff" stroke="#a0a0a0" shape-rendering="crispEdges"/><polygon points="944.5,300.5 954.5,302 954.5,313.5 947,312.5 946,305.5" fill="#ff0000" stroke="#000" stroke-width="0.9"/><path d="M959.5,308 Q965,313 971,308" fill="none" stroke="#000" stroke-width="1.3"/><path d="M962,310l-1,3M964,310.8v3.5M966.5,310.8v3.5M968.5,310l1,3" stroke="#000" stroke-width="1"/><rect x="973" y="297" width="1" height="20" fill="#d4d4d4"/><rect x="916" y="327" width="1" height="1" fill="#000"/><rect x="918" y="327" width="1" height="1" fill="#000"/><rect x="920" y="327" width="1" height="1" fill="#000"/><rect x="922" y="327" width="1" height="1" fill="#000"/><rect x="925.5" y="320.5" width="13" height="13" fill="#fff" stroke="#a0a0a0" shape-rendering="crispEdges"/><path d="M944.3,334 L944.3,328 Q945,321.5 954,320.2 L955,325 Q949.5,326.5 948.8,334 Z" fill="#ff0000" stroke="#000" stroke-width="0.8"/><path d="M959.5,328 Q965,333 971,328" fill="none" stroke="#000" stroke-width="1.3"/><path d="M962,330l-1,3M964,330.8v3.5M966.5,330.8v3.5M968.5,330l1,3" stroke="#000" stroke-width="1"/><rect x="973" y="317" width="1" height="20" fill="#d4d4d4"/><rect x="916" y="347" width="1" height="1" fill="#000"/><rect x="918" y="347" width="1" height="1" fill="#000"/><rect x="920" y="347" width="1" height="1" fill="#000"/><rect x="922" y="347" width="1" height="1" fill="#000"/><rect x="925.5" y="340.5" width="13" height="13" fill="#fff" stroke="#a0a0a0" shape-rendering="crispEdges"/><polyline points="928,347 930.5,349.5 935.5,343" fill="none" stroke="#707070" stroke-width="1.2"/><polygon points="944.5,340.5 954.5,342 954.5,353.5 947,352.5 946,345.5" fill="#ff0000" stroke="#000" stroke-width="0.9"/><rect x="958.5" y="340.5" width="13" height="13" fill="#fff"/><path d="M959.3,347.5 Q965,341.5 970.7,347.5 Q965,353.5 959.3,347.5 Z" fill="#fff" stroke="#000" stroke-width="1.1"/><circle cx="965.2" cy="347.8" r="2.3" fill="#000"/><path d="M965.2,344.5v-3.2M962.8,344.8l-0.7,-2.6M967.5,344.8l0.7,-2.6M960.8,346l-1.5,-1.3M969.5,346l1.5,-1.3" stroke="#000" stroke-width="0.9"/><rect x="973" y="337" width="1" height="20" fill="#d4d4d4"/><rect x="916" y="367" width="1" height="1" fill="#000"/><rect x="918" y="367" width="1" height="1" fill="#000"/><rect x="920" y="367" width="1" height="1" fill="#000"/><rect x="922" y="367" width="1" height="1" fill="#000"/><rect x="925.5" y="360.5" width="13" height="13" fill="#fff" stroke="#a0a0a0" shape-rendering="crispEdges"/><polyline points="928,367 930.5,369.5 935.5,363" fill="none" stroke="#707070" stroke-width="1.2"/><polygon points="944.5,360.5 954.5,362 954.5,373.5 947,372.5 946,365.5" fill="#ff0000" stroke="#000" stroke-width="0.9"/><rect x="958.5" y="360.5" width="13" height="13" fill="#fff"/><path d="M959.3,367.5 Q965,361.5 970.7,367.5 Q965,373.5 959.3,367.5 Z" fill="#fff" stroke="#000" stroke-width="1.1"/><circle cx="965.2" cy="367.8" r="2.3" fill="#000"/><path d="M965.2,364.5v-3.2M962.8,364.8l-0.7,-2.6M967.5,364.8l0.7,-2.6M960.8,366l-1.5,-1.3M969.5,366l1.5,-1.3" stroke="#000" stroke-width="0.9"/><rect x="973" y="357" width="1" height="20" fill="#d4d4d4"/><rect x="916" y="387" width="1" height="1" fill="#000"/><rect x="918" y="387" width="1" height="1" fill="#000"/><rect x="920" y="387" width="1" height="1" fill="#000"/><rect x="922" y="387" width="1" height="1" fill="#000"/><rect x="925.5" y="380.5" width="13" height="13" fill="#fff" stroke="#a0a0a0" shape-rendering="crispEdges"/><path d="M944.3,394 L944.3,388 Q945,381.5 954,380.2 L955,385 Q949.5,386.5 948.8,394 Z" fill="#ff0000" stroke="#000" stroke-width="0.8"/><path d="M959.5,388 Q965,393 971,388" fill="none" stroke="#000" stroke-width="1.3"/><path d="M962,390l-1,3M964,390.8v3.5M966.5,390.8v3.5M968.5,390l1,3" stroke="#000" stroke-width="1"/><rect x="973" y="377" width="1" height="20" fill="#d4d4d4"/><rect x="899" y="407" width="1" height="1" fill="#000"/><rect x="901" y="407" width="1" height="1" fill="#000"/><rect x="903" y="407" width="1" height="1" fill="#000"/><rect x="905" y="407" width="1" height="1" fill="#000"/><rect x="908.5" y="400.5" width="13" height="13" fill="#fff" stroke="#a0a0a0" shape-rendering="crispEdges"/><rect x="929" y="404" width="6" height="6" rx="2" fill="#1a9ad6"/><path d="M942.5,408 Q948,413 954,408" fill="none" stroke="#000" stroke-width="1.3"/><path d="M945,410l-1,3M947,410.8v3.5M949.5,410.8v3.5M951.5,410l1,3" stroke="#000" stroke-width="1"/><rect x="956" y="397" width="1" height="20" fill="#d4d4d4"/><rect x="899" y="427" width="1" height="1" fill="#000"/><rect x="901" y="427" width="1" height="1" fill="#000"/><rect x="903" y="427" width="1" height="1" fill="#000"/><rect x="905" y="427" width="1" height="1" fill="#000"/><rect x="908.5" y="420.5" width="13" height="13" fill="#fff" stroke="#a0a0a0" shape-rendering="crispEdges"/><rect x="929" y="424" width="6" height="6" rx="2" fill="#e01010"/><path d="M942.5,428 Q948,433 954,428" fill="none" stroke="#000" stroke-width="1.3"/><path d="M945,430l-1,3M947,430.8v3.5M949.5,430.8v3.5M951.5,430l1,3" stroke="#000" stroke-width="1"/><rect x="956" y="417" width="1" height="20" fill="#d4d4d4"/><rect x="899" y="447" width="1" height="1" fill="#000"/><rect x="901" y="447" width="1" height="1" fill="#000"/><rect x="903" y="447" width="1" height="1" fill="#000"/><rect x="905" y="447" width="1" height="1" fill="#000"/><rect x="908.5" y="440.5" width="13" height="13" fill="#fff" stroke="#a0a0a0" shape-rendering="crispEdges"/><path d="M927.3,454 L927.3,448 Q928,441.5 937,440.2 L938,445 Q932.5,446.5 931.8,454 Z" fill="#b8860b" stroke="#000" stroke-width="0.8"/><path d="M942.5,448 Q948,453 954,448" fill="none" stroke="#000" stroke-width="1.3"/><path d="M945,450l-1,3M947,450.8v3.5M949.5,450.8v3.5M951.5,450l1,3" stroke="#000" stroke-width="1"/><rect x="956" y="437" width="1" height="20" fill="#d4d4d4"/><rect x="899" y="467" width="1" height="1" fill="#000"/><rect x="901" y="467" width="1" height="1" fill="#000"/><rect x="903" y="467" width="1" height="1" fill="#000"/><rect x="905" y="467" width="1" height="1" fill="#000"/><rect x="908.5" y="460.5" width="13" height="13" fill="#fff" stroke="#a0a0a0" shape-rendering="crispEdges"/><rect x="929" y="464" width="6" height="6" rx="2" fill="#138080"/><path d="M942.5,468 Q948,473 954,468" fill="none" stroke="#000" stroke-width="1.3"/><path d="M945,470l-1,3M947,470.8v3.5M949.5,470.8v3.5M951.5,470l1,3" stroke="#000" stroke-width="1"/><rect x="956" y="457" width="1" height="20" fill="#d4d4d4"/><polyline points="896,463.5 899,467 896,470.5" fill="none" stroke="#202020" stroke-width="1.3"/><rect x="899" y="487" width="1" height="1" fill="#000"/><rect x="901" y="487" width="1" height="1" fill="#000"/><rect x="903" y="487" width="1" height="1" fill="#000"/><rect x="905" y="487" width="1" height="1" fill="#000"/><rect x="908.5" y="480.5" width="13" height="13" fill="#fff" stroke="#a0a0a0" shape-rendering="crispEdges"/><rect x="929" y="484" width="6" height="6" rx="2" fill="#e07040"/><path d="M942.5,488 Q948,493 954,488" fill="none" stroke="#000" stroke-width="1.3"/><path d="M945,490l-1,3M947,490.8v3.5M949.5,490.8v3.5M951.5,490l1,3" stroke="#000" stroke-width="1"/><rect x="956" y="477" width="1" height="20" fill="#d4d4d4"/><rect x="899" y="507" width="1" height="1" fill="#000"/><rect x="901" y="507" width="1" height="1" fill="#000"/><rect x="903" y="507" width="1" height="1" fill="#000"/><rect x="905" y="507" width="1" height="1" fill="#000"/><rect x="908.5" y="500.5" width="13" height="13" fill="#fff" stroke="#a0a0a0" shape-rendering="crispEdges"/><rect x="929" y="504" width="6" height="6" rx="2" fill="#a02020"/><path d="M942.5,508 Q948,513 954,508" fill="none" stroke="#000" stroke-width="1.3"/><path d="M945,510l-1,3M947,510.8v3.5M949.5,510.8v3.5M951.5,510l1,3" stroke="#000" stroke-width="1"/><rect x="956" y="497" width="1" height="20" fill="#d4d4d4"/></svg>
<div class="t" style="left:960px;top:241px;color:#fff">Workings</div>
<div class="t" style="left:1150px;top:241px;width:88px;text-align:right">0</div>
<div class="t" style="left:977px;top:261px;color:#1e1e1e">Level - Default</div>
<div class="t" style="left:1150px;top:261px;width:88px;text-align:right">33</div>
<div class="t" style="left:977px;top:281px;color:#1e1e1e">Level - Level 53</div>
<div class="t" style="left:1150px;top:281px;width:88px;text-align:right">141</div>
<div class="t" style="left:977px;top:301px;color:#1e1e1e">Level - Level 58</div>
<div class="t" style="left:1150px;top:301px;width:88px;text-align:right">210</div>
<div class="t" style="left:977px;top:321px;color:#1e1e1e">Level - Level 21</div>
<div class="t" style="left:1150px;top:321px;width:88px;text-align:right">1253</div>
<div class="t" style="left:977px;top:341px;color:#1e1e1e">Level - Level 55</div>
<div class="t" style="left:1150px;top:341px;width:88px;text-align:right">183</div>
<div class="t" style="left:977px;top:361px;color:#1e1e1e">Level - Level 20</div>
<div class="t" style="left:1150px;top:361px;width:88px;text-align:right">1327</div>
<div class="t" style="left:977px;top:381px;color:#1e1e1e">Level - Level 25</div>
<div class="t" style="left:1150px;top:381px;width:88px;text-align:right">267</div>
<div class="t" style="left:960px;top:401px;color:#1e1e1e">Pegs</div>
<div class="t" style="left:1150px;top:401px;width:88px;text-align:right">0</div>
<div class="t" style="left:960px;top:421px;color:#1e1e1e">Pit</div>
<div class="t" style="left:1150px;top:421px;width:88px;text-align:right">1</div>
<div class="t" style="left:960px;top:441px;color:#1e1e1e">PitContour.svu</div>
<div class="t" style="left:1150px;top:441px;width:88px;text-align:right">0</div>
<div class="t" style="left:960px;top:461px;color:#1e1e1e">Contours/Sections Poly</div>
<div class="t" style="left:1150px;top:461px;width:88px;text-align:right">10</div>
<div class="t" style="left:960px;top:481px;color:#1e1e1e">Tops.xyz</div>
<div class="t" style="left:1150px;top:481px;width:88px;text-align:right">0</div>
<div class="t" style="left:960px;top:501px;color:#1e1e1e">Base.xyz</div>
<div class="t" style="left:1150px;top:501px;width:88px;text-align:right">0</div>
<div class="a" style="left:0;top:0;width:1247px;height:801px;border:1px solid #1a1a1a"></div>
</body></html>
